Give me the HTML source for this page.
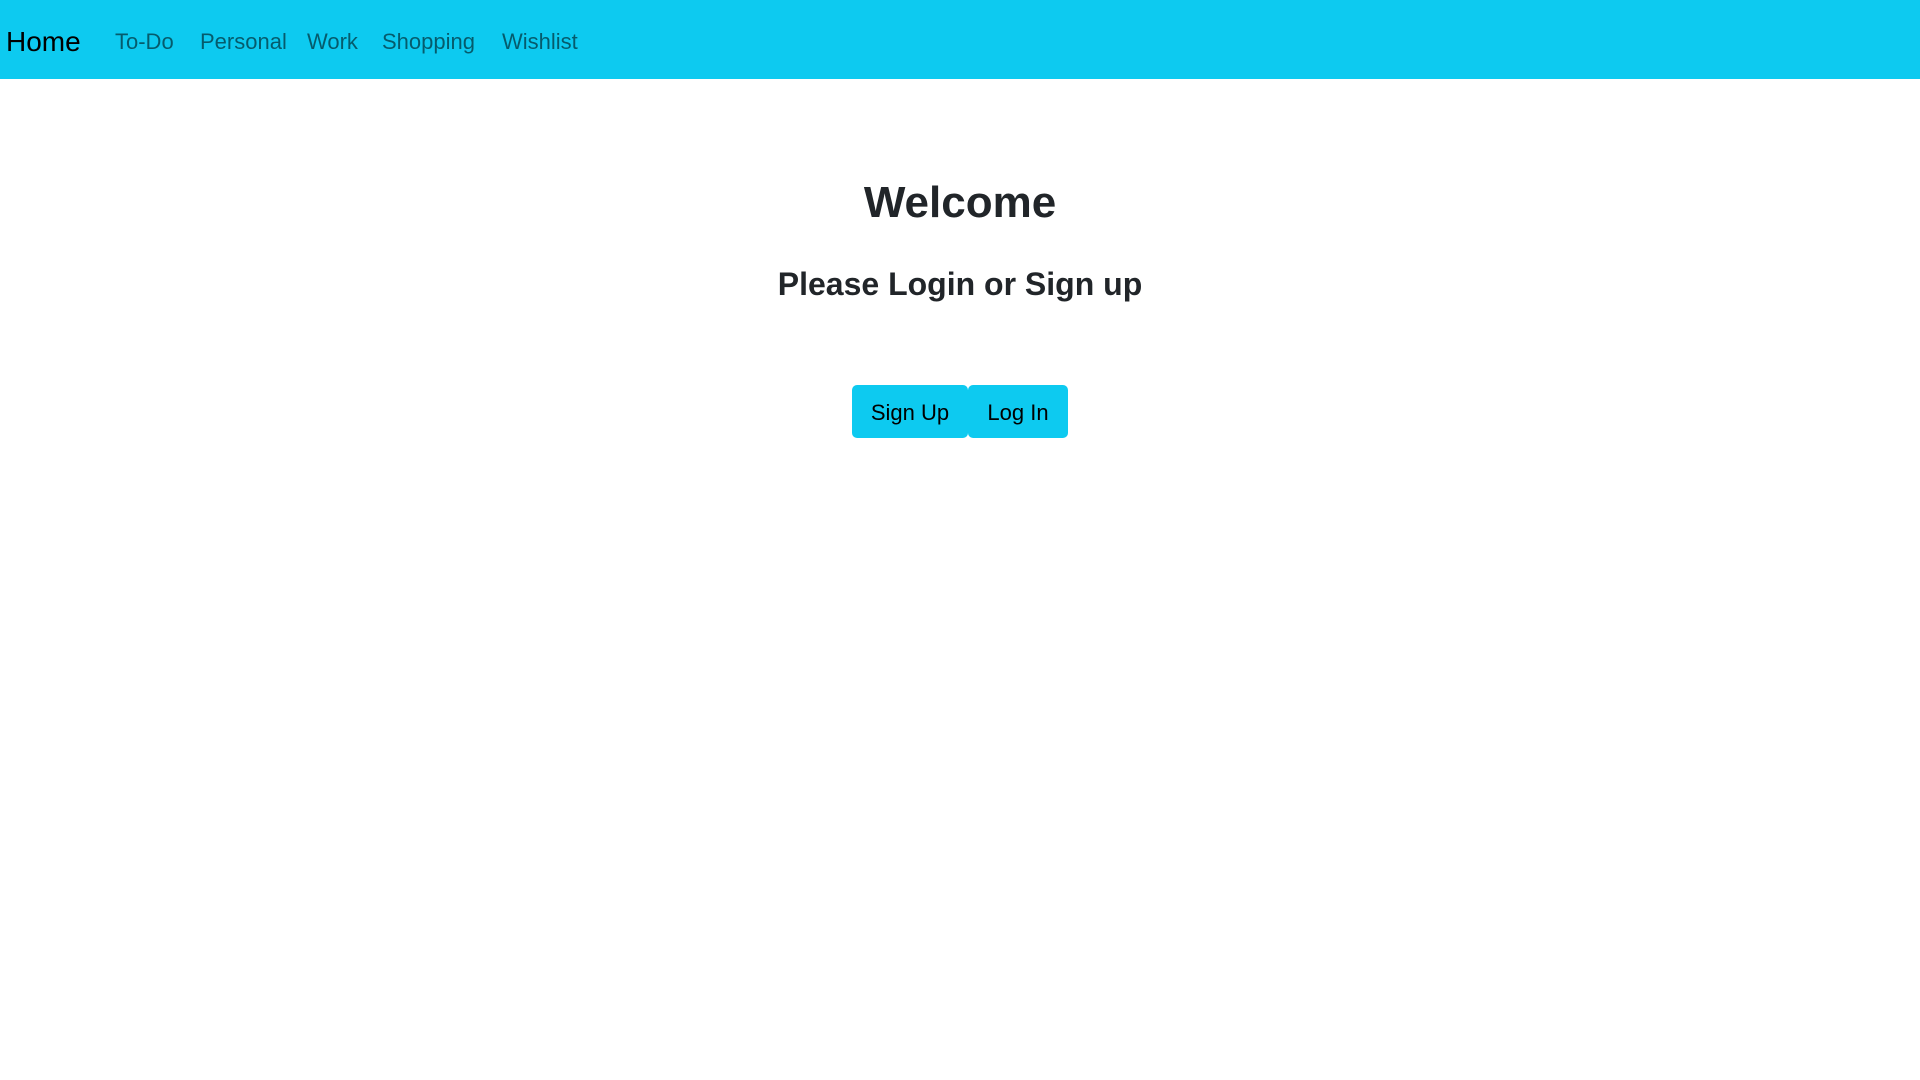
<!DOCTYPE html>
<html><head><style>
body{margin:0;background:#fff;font-family:"Liberation Sans",sans-serif;color:#212529;}
.nav{height:79px;background:#0dcaf0;position:relative;}
.nav span{position:absolute;top:0;line-height:84px;font-size:22px;color:rgba(0,0,0,.55);white-space:nowrap}
.nav .home{font-size:28px;color:#000;left:6px;line-height:84px}
h1{position:absolute;left:0;width:1920px;text-align:center;margin:0;font-size:44px;font-weight:bold;top:177px;line-height:52px}
h2{position:absolute;left:0;width:1920px;text-align:center;margin:0;font-size:32px;font-weight:bold;top:264px;line-height:40px}
.btn{position:absolute;top:385px;height:53px;background:#0dcaf0;border-radius:5px;font-size:22px;line-height:55px;text-align:center;color:#000}
</style></head><body>
<div class="nav">
<span class="home">Home</span>
<span style="left:115px">To-Do</span>
<span style="left:200px">Personal</span>
<span style="left:307px">Work</span>
<span style="left:382px">Shopping</span>
<span style="left:502px">Wishlist</span>
</div>
<h1>Welcome</h1>
<h2>Please Login or Sign up</h2>
<div class="btn" style="left:852px;width:116px">Sign Up</div>
<div class="btn" style="left:968px;width:100px">Log In</div>
</body></html>
